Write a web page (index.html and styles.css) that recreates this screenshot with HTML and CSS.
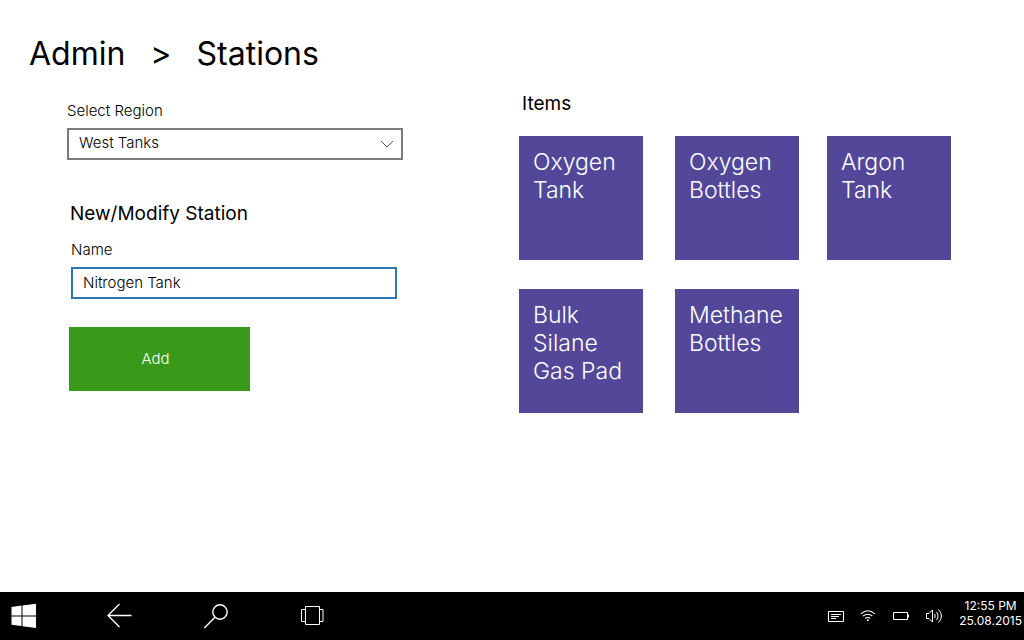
FILE: index.html
```html
<!DOCTYPE html>
<html lang="en">
<head>
<meta charset="utf-8">
<meta name="viewport" content="width=device-width, initial-scale=1">
<title>Admin - Stations</title>
<link rel="stylesheet" href="styles.css">
</head>
<body>
<main class="page">
  <h1 class="breadcrumb"><span>Admin</span><span>&gt;</span><span>Stations</span></h1>
  <div class="columns">
    <form class="form">
      <div class="region">
        <label class="label" for="region">Select Region</label>
        <div class="select-wrap">
          <select class="control select" id="region"><option>West Tanks</option></select>
          <svg class="chevron" width="14" height="8" viewBox="0 0 14 8" fill="none" stroke="#555" aria-hidden="true"><path d="M1 1l6 6 6-6"/></svg>
        </div>
      </div>
      <div class="station">
        <h2 class="heading">New/Modify Station</h2>
        <div class="field">
          <label class="label" for="name">Name</label>
          <input class="control name" id="name" type="text" value="Nitrogen Tank">
        </div>
        <button class="add" type="button">Add</button>
      </div>
    </form>
    <section class="items">
      <h2 class="heading items-heading">Items</h2>
      <div class="tiles">
        <button class="tile" type="button">Oxygen Tank</button>
        <button class="tile" type="button">Oxygen Bottles</button>
        <button class="tile" type="button">Argon Tank</button>
        <button class="tile" type="button">Bulk Silane Gas Pad</button>
        <button class="tile" type="button">Methane Bottles</button>
      </div>
    </section>
  </div>
</main>
<footer class="taskbar">
  <nav class="nav">
    <button class="icon" type="button" aria-label="Start">
      <svg width="26" height="26" viewBox="0 0 26 26" fill="#fff"><path d="M.500 4l10-1.500v10H.500zM11.500 2.400L25 .800v11.700H11.500zM.500 13.500h10v9.500L.500 21.800zM11.500 13.500H25v11.600L11.500 23.200z"/></svg>
    </button>
    <button class="icon" type="button" aria-label="Back">
      <svg width="26" height="26" viewBox="0 0 26 26" fill="none" stroke="#fff" stroke-width="1.300"><path d="M12.500 1L1 12.500 12.500 24M1 12.500H24.500"/></svg>
    </button>
    <button class="icon" type="button" aria-label="Search">
      <svg width="26" height="26" viewBox="0 0 26 26" fill="none" stroke="#fff" stroke-width="1.400"><circle cx="17" cy="9" r="7.200"/><path d="M12 14.200L1.300 25"/></svg>
    </button>
    <button class="icon" type="button" aria-label="Task view">
      <svg width="26" height="26" viewBox="0 0 26 26" fill="none" stroke="#fff"><path d="M6.500 3.500h14v18h-14zM6.500 6.500h-4v12h4M20.500 6.500h3.500v12h-3.500"/></svg>
    </button>
  </nav>
  <div class="tray">
    <div class="tray-icons">
      <svg width="18" height="14" viewBox="0 0 18 14" fill="none" stroke="#fff"><path d="M1.500 2.500h15v10h-15zM4 5.500h10M4 7.500h8M4 9.500h5"/></svg>
      <svg width="18" height="14" viewBox="0 0 18 14" fill="none" stroke="#fff" stroke-width="1.100"><path d="M.800 4.800q7-6 14 0M3 7.200q4.700-4 9.400 0M5.200 9.500q2.500-2 5 0"/><circle cx="7.800" cy="11.300" r="1" fill="#fff" stroke="none"/></svg>
      <svg width="18" height="14" viewBox="0 0 18 14" fill="none" stroke="#fff"><path d="M.500 3.500h14v7h-14zM15.500 5.500v3"/></svg>
      <svg width="18" height="14" viewBox="0 0 18 14" fill="none" stroke="#fff"><path d="M.500 4.500H3L6.500 1v12L3 9.500H.500zM8.500 5q1.500 2 0 4M10.500 3q3.200 4 0 8M12.500 .500q6 6.500 0 13"/></svg>
    </div>
    <div class="clock"><time datetime="12:55">12:55 PM</time><time datetime="2015-08-25">25.08.2015</time></div>
  </div>
</footer>
</body>
</html>
```
FILE: styles.css
```css
* { box-sizing: border-box; }
body {
  margin: 0;
  min-height: 100vh;
  display: flex;
  flex-direction: column;
  background: #fff;
  color: #000;
  font: 15px/20px Inter, "Liberation Sans", sans-serif;
}
button, input, select { font: inherit; border: 0; border-radius: 0; }
h1, h2 { margin: 0; font-weight: 400; }

.page { flex: 1; padding-top: 32px; }
.breadcrumb {
  display: flex;
  gap: 25px;
  padding-left: 29px;
  font-size: 32px;
  line-height: 44px;
}
.columns { display: grid; grid-template-columns: 1fr 1fr; padding-top: 16px; }
.heading { font-size: 19px; line-height: 24px; }
.label { display: block; font-weight: 300; }

.region { padding: 9px 109px 0 67px; }
.select-wrap { display: grid; align-items: center; margin-top: 7px; }
.select-wrap > * { grid-area: 1 / 1; }
.chevron { justify-self: end; margin-right: 9px; pointer-events: none; }
.control {
  display: block;
  width: 100%;
  height: 32px;
  padding: 0 10px 2px;
  background: #fff;
  color: #000;
  font-weight: 300;
}
.select { appearance: none; border: 2px solid #7a7a7a; }
.station { padding: 42px 115px 0 69px; }
.station .heading { padding-left: 1px; }
.field { padding: 14px 0 0 2px; }
.name { margin-top: 7px; border: 2px solid #2e75b9; outline: 0; }
.add {
  width: 181px;
  height: 64px;
  margin-top: 28px;
  padding: 0 14px 0 6px;
  background: #3a9918;
  color: #fff;
  font-weight: 300;
}

.items { padding-left: 7px; }
.items-heading { padding-left: 3px; }
.tiles {
  display: grid;
  grid-template-columns: 156px 152px 124px;
  row-gap: 29px;
  padding-top: 20px;
}
.tile {
  display: flex;
  width: 124px;
  height: 124px;
  padding: 12px 14px;
  background: #524798;
  color: #fff;
  font-size: 23px;
  font-weight: 300;
  line-height: 28px;
  text-align: left;
}

.taskbar {
  display: flex;
  justify-content: space-between;
  height: 48px;
  background: #000;
  color: #fff;
}
.nav { display: flex; align-items: center; gap: 70px; padding-left: 11px; }
.icon { display: flex; padding: 0; background: none; }
.tray { display: flex; align-items: center; gap: 15px; padding-right: 2px; }
.tray-icons { display: flex; gap: 15px; }
.clock { display: flex; flex-direction: column; align-items: center; font-size: 12px; line-height: 15px; padding-bottom: 6px; }
```
